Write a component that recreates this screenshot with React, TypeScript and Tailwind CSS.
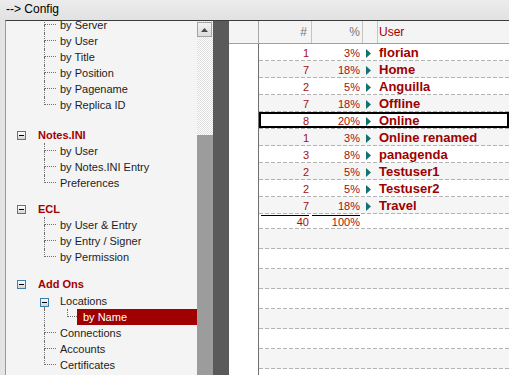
import type { ReactNode } from 'react'

const rows = [
  { n: '1', p: '3%', user: 'florian' },
  { n: '7', p: '18%', user: 'Home' },
  { n: '2', p: '5%', user: 'Anguilla' },
  { n: '7', p: '18%', user: 'Offline' },
  { n: '8', p: '20%', user: 'Online', selected: true },
  { n: '1', p: '3%', user: 'Online renamed' },
  { n: '3', p: '8%', user: 'panagenda' },
  { n: '2', p: '5%', user: 'Testuser1' },
  { n: '2', p: '5%', user: 'Testuser2' },
  { n: '7', p: '18%', user: 'Travel' },
]

function Minus() {
  return (
    <div className="w-[9px] h-[9px] shrink-0 border border-[#3a7fae] bg-[linear-gradient(#ffffff,#d4d4d4)] flex items-center justify-center">
      <div className="w-[5px] h-px bg-black" />
    </div>
  )
}

function Connector({ last }: { last?: boolean }) {
  return (
    <div className="flex flex-col w-[12px] shrink-0">
      <div className="h-[8px] border-l border-b border-dotted border-[#6f6f6f]" />
      {!last && <div className="flex-1 border-l border-dotted border-[#6f6f6f]" />}
    </div>
  )
}

function Leaf({ label, last }: { label: string; last?: boolean }) {
  return (
    <div className="flex h-[16px]">
      <div className="w-[38px] shrink-0" />
      <Connector last={last} />
      <span className="ml-[4px] leading-[16px] whitespace-nowrap">{label}</span>
    </div>
  )
}

function Section({ label, className }: { label: string; className: string }) {
  return (
    <div className={`flex items-center h-[16px] ${className}`}>
      <div className="ml-[11px]">
        <Minus />
      </div>
      <span className="ml-[12px] font-bold text-[#a30000] leading-[16px]">{label}</span>
    </div>
  )
}

function Tree() {
  return (
    <div className="-mt-[4px] text-[11px] text-[#1c1c1c]">
      <Leaf label="by Server" />
      <Leaf label="by User" />
      <Leaf label="by Title" />
      <Leaf label="by Position" />
      <Leaf label="by Pagename" />
      <Leaf label="by Replica ID" last />

      <Section label="Notes.INI" className="mt-[14px]" />
      <Leaf label="by User" />
      <Leaf label="by Notes.INI Entry" />
      <Leaf label="Preferences" last />

      <Section label="ECL" className="mt-[10px]" />
      <Leaf label="by User & Entry" />
      <Leaf label="by Entry / Signer" />
      <Leaf label="by Permission" last />

      <Section label="Add Ons" className="mt-[11px]" />
      {/* Locations */}
      <div className="flex h-[16px] mt-px">
        <div className="w-[34px] shrink-0" />
        <div className="flex flex-col w-[9px] shrink-0">
          <div className="h-[5px]" />
          <Minus />
          <div className="flex-1 ml-[4px] border-l border-dotted border-[#6f6f6f]" />
        </div>
        <span className="ml-[11px] leading-[16px]">Locations</span>
      </div>
      {/* by Name (selected) */}
      <div className="flex h-[16px]">
        <div className="w-[38px] shrink-0" />
        <div className="w-[23px] shrink-0 border-l border-dotted border-[#6f6f6f]" />
        <div className="flex flex-col w-[10px] shrink-0">
          <div className="h-[8px] border-l border-b border-dotted border-[#6f6f6f]" />
        </div>
        <div className="flex-1 bg-[#a00000] text-white pl-[6px] leading-[16px]">by Name</div>
      </div>
      <Leaf label="Connections" />
      <Leaf label="Accounts" />
      <Leaf label="Certificates" last />
    </div>
  )
}

function Dashed() {
  return (
    <div className="h-px shrink-0 bg-[image:repeating-linear-gradient(to_right,#b2b2b2_0_4px,transparent_4px_6px)]" />
  )
}

function Row({ children, alt, h }: { children: ReactNode; alt: boolean; h: string }) {
  return (
    <div className={`flex flex-col shrink-0 ${alt ? 'bg-[#f5f5f5]' : 'bg-white'}`}>
      <div className={`flex ${h}`}>{children}</div>
      <Dashed />
    </div>
  )
}

function Grid() {
  return (
    <div className="flex-1 flex flex-col bg-white overflow-hidden">
      {/* header */}
      <div className="flex h-[23px] shrink-0 border-b border-[#a0a0a0] bg-[#f4f4f4] text-[12px] leading-[22px]">
        <div className="w-[29px] shrink-0" />
        <div className="w-px bg-[#a8a8a8]" />
        <div className="w-[52px] shrink-0 text-right pr-[4px] text-[#777777]">#</div>
        <div className="w-px bg-[#c4c4c4]" />
        <div className="w-[50px] shrink-0 text-right pr-[2px] text-[#777777]">%</div>
        <div className="w-px bg-[#c4c4c4]" />
        <div className="w-[14px] shrink-0" />
        <div className="w-px bg-[#c4c4c4]" />
        <div className="flex-1 pl-px text-[#a00000]">User</div>
      </div>
      {/* body */}
      <div className="flex flex-1">
        <div className="w-[29px] shrink-0 bg-white" />
        <div className="w-px shrink-0 bg-[#707070]" />
        <div className="flex-1 flex flex-col">
          {rows.map((r, i) => (
            <Row key={i} alt={i % 2 === 1} h="h-[16px]">
              <div
                className={`flex flex-1 items-center pt-[2px] ${r.selected ? 'outline-2 outline-black -outline-offset-2' : ''}`}
              >
                <div className="w-[52px] shrink-0 text-right pr-[2px] text-[11px] text-[#a31010]">{r.n}</div>
                <div className="w-[51px] shrink-0 text-right pr-[2px] text-[11px] text-[#a31010]">{r.p}</div>
                <div className="w-[15px] shrink-0 pl-[4px] flex items-center">
                  <svg width="5" height="9" viewBox="0 0 5 9">
                    <polygon points="0,0 5,4.5 0,9" fill="#177070" />
                  </svg>
                </div>
                <div className="flex-1 pl-[2px] text-[13px] font-bold text-[#9c0000] whitespace-nowrap">{r.user}</div>
              </div>
            </Row>
          ))}
          <Row alt={false} h="h-[14px]">
            <div className="w-[52px] shrink-0 px-[2px]">
              <div className="mt-px border-t border-black text-right text-[11px] leading-[13px] text-[#a31010]">40</div>
            </div>
            <div className="w-[51px] shrink-0 pl-px pr-[2px]">
              <div className="mt-px border-t border-black text-right text-[11px] leading-[13px] text-[#a31010]">100%</div>
            </div>
          </Row>
          {[0, 1, 2, 3, 4, 5, 6, 7].map((i) => (
            <Row key={i} alt={i % 2 === 0} h="h-[19px]">
              <div />
            </Row>
          ))}
        </div>
      </div>
    </div>
  )
}

export default function App() {
  return (
    <div className="w-[509px] h-[375px] overflow-hidden flex flex-col bg-[#e4e4e4] font-['Liberation_Sans',Arial,sans-serif]">
      {/* title */}
      <div className="h-[20px] shrink-0 pl-[6px] text-[12px] leading-[18px] text-black bg-[linear-gradient(#ececec,#e2e2e2)]">
        --&gt; Config
      </div>
      <div className="flex flex-1 min-h-0 ml-[5px] border-t border-l border-t-[#3c3c3c] border-l-[#9a9a9a]">
        {/* tree panel */}
        <div className="w-[191px] shrink-0 bg-[#f4f4f4] overflow-hidden">
          <Tree />
        </div>
        {/* scrollbar */}
        <div className="w-[16px] shrink-0 flex flex-col bg-[image:repeating-conic-gradient(#ffffff_0_25%,#dedede_0_50%)] bg-[length:2px_2px]">
          <div className="mt-px w-[15px] h-[15px] border border-[#a4a4a4] bg-[linear-gradient(#f2f2f2,#dcdcdc)] flex items-center justify-center">
            <svg width="7" height="4" viewBox="0 0 7 4">
              <polygon points="3.5,0 7,4 0,4" fill="#4a4a4a" />
            </svg>
          </div>
          <div className="h-[98px] shrink-0" />
          <div className="flex-1 bg-[#9c9c9c]" />
        </div>
        {/* splitter */}
        <div className="w-[16px] shrink-0 bg-[#5a5a5a]" />
        <Grid />
      </div>
    </div>
  )
}
